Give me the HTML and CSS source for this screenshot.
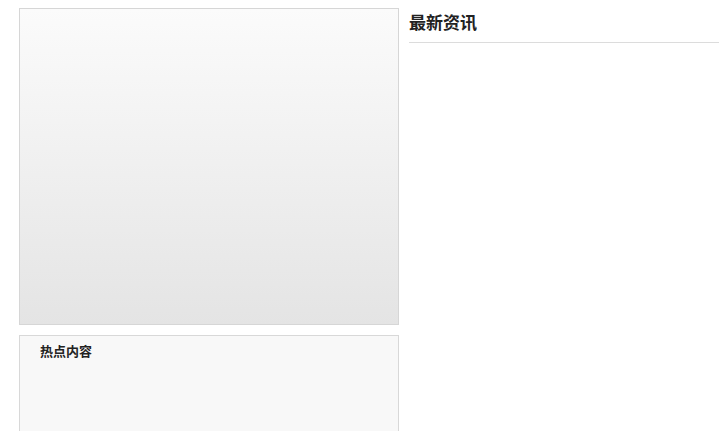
FILE: index.html
```html
<!DOCTYPE html>
<html lang="zh-CN">
<head>
<meta charset="utf-8">
<title>资讯</title>
<link rel="stylesheet" href="styles.css">
</head>
<body>
<div class="page">
  <div class="left-col">
    <div class="slider"></div>
    <div class="hot">
      <h3 class="hot-title">热点内容</h3>
    </div>
  </div>
  <div class="right-col">
    <h2 class="news-title">最新资讯</h2>
  </div>
</div>
</body>
</html>
```
FILE: styles.css
```css
html, body {
  margin: 0;
  padding: 0;
  background: #ffffff;
  font-family: "Noto Sans CJK SC", "Liberation Sans", sans-serif;
  color: #222;
}
html {
  height: 431px;
  overflow: hidden;
}
.page {
  display: flex;
  gap: 10px;
  padding: 8px 0 0 19px;
}
.left-col {
  width: 380px;
  display: flex;
  flex-direction: column;
  gap: 10px;
}
.slider {
  box-sizing: border-box;
  height: 317px;
  border: 1px solid #d6d6d6;
  background: linear-gradient(to bottom, #fbfbfb 0%, #f2f2f2 40%, #e4e4e4 100%);
}
.hot {
  box-sizing: border-box;
  height: 110px;
  border: 1px solid #d8d8d8;
  background: #f8f8f8;
  padding: 6px 20px;
}
.hot-title {
  margin: 0;
  font-size: 13px;
  line-height: 17px;
  font-weight: bold;
  color: #222;
}
.right-col {
  width: 310px;
}
.news-title {
  margin: 0;
  font-size: 17px;
  line-height: 22px;
  font-weight: bold;
  color: #222;
  padding-top: 3px;
  padding-bottom: 9px;
  border-bottom: 1px solid #dcdcdc;
}
```
